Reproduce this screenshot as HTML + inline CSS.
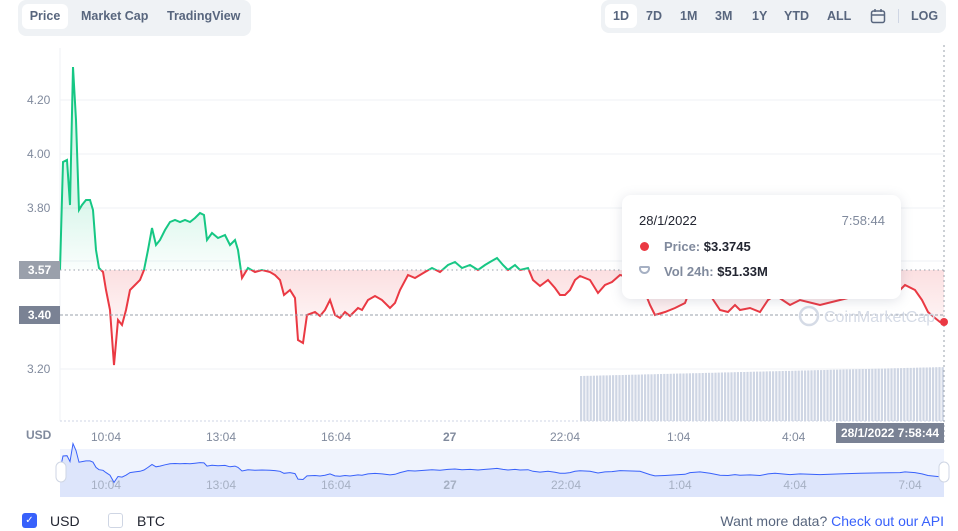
<!DOCTYPE html><html><head><meta charset="utf-8"><style>
body{margin:0;width:958px;height:531px;background:#fff;font-family:"Liberation Sans",sans-serif;overflow:hidden;position:relative}
.tabs{position:absolute;left:18px;top:0;width:233px;height:36px;background:#eff2f5;border-radius:8px}
.tab{position:absolute;top:4px;height:25px;line-height:25px;font-size:12.5px;color:#58667e;font-weight:bold}
.rng{position:absolute;left:601px;top:0;width:345px;height:33px;background:#eff2f5;border-radius:8px}
.r{position:absolute;top:4px;height:24px;line-height:24px;font-size:12.5px;font-weight:bold;color:#58667e}
.ax{position:absolute;font-size:12px;color:#808a9d}
.tt{position:absolute;left:622px;top:195px;width:279px;height:104px;background:#fff;border-radius:9px;box-shadow:0 2px 12px rgba(88,102,126,.18);font-size:13px}
</style></head><body>
<div class="tabs"><div class="tab" style="left:4px;width:46px;background:#fff;border-radius:6px;text-align:center">Price</div><div class="tab" style="left:63px">Market Cap</div><div class="tab" style="left:149px">TradingView</div></div>
<div class="rng"><div class="r" style="left:4px;width:32px;background:#fff;border-radius:6px;text-align:center">1D</div><div class="r" style="left:45px">7D</div><div class="r" style="left:79px">1M</div><div class="r" style="left:114px">3M</div><div class="r" style="left:151px">1Y</div><div class="r" style="left:183px">YTD</div><div class="r" style="left:226px">ALL</div>
<svg style="position:absolute;left:269px;top:8px" width="16" height="16"><rect x="1.5" y="3" width="13" height="11.5" rx="2" fill="none" stroke="#58667e" stroke-width="1.5"/><line x1="1.5" y1="7" x2="14.5" y2="7" stroke="#58667e" stroke-width="1.5"/><line x1="5" y1="1" x2="5" y2="4" stroke="#58667e" stroke-width="1.5"/><line x1="11" y1="1" x2="11" y2="4" stroke="#58667e" stroke-width="1.5"/></svg>
<div style="position:absolute;left:297px;top:9px;width:1px;height:14px;background:#cfd6e4"></div><div class="r" style="left:310px">LOG</div></div>
<svg style="position:absolute;left:0;top:0" width="958" height="531">
<defs>
<linearGradient id="gg" gradientUnits="userSpaceOnUse" x1="0" y1="200" x2="0" y2="270"><stop offset="0" stop-color="#16c784" stop-opacity=".16"/><stop offset="1" stop-color="#16c784" stop-opacity=".02"/></linearGradient>
<linearGradient id="rg" gradientUnits="userSpaceOnUse" x1="0" y1="270" x2="0" y2="340"><stop offset="0" stop-color="#ea3943" stop-opacity=".16"/><stop offset="1" stop-color="#ea3943" stop-opacity=".02"/></linearGradient>
<clipPath id="up"><rect x="0" y="0" width="958" height="270"/></clipPath>
<clipPath id="dn"><rect x="0" y="270" width="958" height="200"/></clipPath>
</defs>
<g stroke="#eff2f5"><line x1="60" y1="100" x2="944" y2="100"/><line x1="60" y1="154" x2="944" y2="154"/><line x1="60" y1="208" x2="944" y2="208"/><line x1="60" y1="261" x2="944" y2="261"/><line x1="60" y1="369" x2="944" y2="369"/><line x1="60" y1="48" x2="60" y2="421"/></g>
<g id="vol" fill="#cfd6e4"></g>
<polygon id="fu" clip-path="url(#up)" fill="url(#gg)"/>
<polygon id="fd" clip-path="url(#dn)" fill="url(#rg)"/>
<polyline id="lu" clip-path="url(#up)" fill="none" stroke="#16c784" stroke-width="2"/>
<polyline id="ld" clip-path="url(#dn)" fill="none" stroke="#ea3943" stroke-width="2"/>
<line x1="60" y1="270" x2="944" y2="270" stroke="#9aa0ab" stroke-dasharray="1.5 3"/>
<line x1="60" y1="315" x2="944" y2="315" stroke="#9aa0ab" stroke-dasharray="3 2"/>
<line x1="944" y1="45" x2="944" y2="445" stroke="#9aa0ab" stroke-dasharray="2 3"/>
<line x1="60" y1="421" x2="944" y2="421" stroke="#cfd6e4" stroke-dasharray="2 2"/>
<circle cx="944" cy="322" r="4" fill="#ea3943"/>
<circle cx="809" cy="316" r="9" fill="none" stroke="#d5dbe6" stroke-width="2.5"/>
<text x="824" y="322" font-size="16" fill="#d5dbe6" font-family="Liberation Sans">CoinMarketCap</text>
<rect x="60" y="449" width="884" height="48" fill="#eff3fd"/>
<polygon id="nf" fill="#dde5fb"/><polyline id="nl" fill="none" stroke="#3861fb" stroke-width="1"/>
<rect x="56" y="462" width="10" height="20" rx="5" fill="#fff" stroke="#cfd6e4"/><rect x="939" y="462" width="10" height="20" rx="5" fill="#fff" stroke="#cfd6e4"/>
<g font-size="12" fill="#a6b0c3" font-family="Liberation Sans" text-anchor="middle"><text x="106" y="489">10:04</text><text x="221" y="489">13:04</text><text x="336" y="489">16:04</text><text x="450" y="489" font-weight="bold">27</text><text x="566" y="489">22:04</text><text x="680" y="489">1:04</text><text x="795" y="489">4:04</text><text x="910" y="489">7:04</text></g>
</svg>
<div class="ax" style="left:27px;top:93px">4.20</div><div class="ax" style="left:27px;top:147px">4.00</div><div class="ax" style="left:27px;top:201px">3.80</div><div class="ax" style="left:27px;top:362px">3.20</div>
<div style="position:absolute;left:19px;top:261px;width:41px;height:18px;background:#9aa0ab;color:#fff;font-size:12px;font-weight:bold;line-height:18px;text-align:center">3.57</div>
<div style="position:absolute;left:19px;top:306px;width:41px;height:18px;background:#7a8294;color:#fff;font-size:12px;font-weight:bold;line-height:18px;text-align:center">3.40</div>
<div class="ax" style="left:26px;top:428px;font-weight:bold">USD</div>
<div class="ax" style="left:91px;top:430px">10:04</div><div class="ax" style="left:206px;top:430px">13:04</div><div class="ax" style="left:321px;top:430px">16:04</div><div class="ax" style="left:443px;top:430px;font-weight:bold">27</div><div class="ax" style="left:550px;top:430px">22:04</div><div class="ax" style="left:667px;top:430px">1:04</div><div class="ax" style="left:782px;top:430px">4:04</div>
<div style="position:absolute;left:836px;top:423px;width:108px;height:20px;background:#7a8294;color:#fff;font-size:12px;font-weight:bold;line-height:20px;text-align:center">28/1/2022 7:58:44</div>
<div class="tt"><div style="position:absolute;left:17px;top:18px;color:#222531">28/1/2022</div><div style="position:absolute;right:16px;top:18px;color:#808a9d">7:58:44</div>
<div style="position:absolute;left:18px;top:47px;width:9px;height:9px;border-radius:50%;background:#ea3943"></div><div style="position:absolute;left:42px;top:44px;color:#808a9d;font-weight:bold">Price: <span style="color:#222531">$3.3745</span></div>
<div style="position:absolute;left:17px;top:71px;width:11px;height:8px;border:2px solid #a6b0c3;border-radius:2px 2px 6px 6px;box-sizing:border-box"></div><div style="position:absolute;left:42px;top:69px;color:#808a9d;font-weight:bold">Vol 24h: <span style="color:#222531">$51.33M</span></div></div>
<div style="position:absolute;left:22px;top:513px;width:15px;height:15px;border-radius:3px;background:#3861fb;color:#fff;font-size:10px;text-align:center;line-height:15px">✓</div><div style="position:absolute;left:50px;top:513px;font-size:14px;color:#222531">USD</div>
<div style="position:absolute;left:108px;top:513px;width:15px;height:15px;border-radius:3px;border:1px solid #cfd6e4;box-sizing:border-box"></div><div style="position:absolute;left:137px;top:513px;font-size:14px;color:#222531">BTC</div>
<div style="position:absolute;right:14px;top:513px;font-size:14px;color:#58667e">Want more data? <span style="color:#3861fb">Check out our API</span></div>
<script>
var p=[[60,270],[63,162],[67,160],[70,205],[73,67],[76,120],[79,210],[82,205],[86,200],[90,200],[93,210],[96,250],[99,268],[103,272],[106,290],[110,310],[114,365],[118,320],[122,325],[126,310],[130,290],[135,285],[140,280],[144,270],[148,250],[152,228],[156,245],[160,240],[165,230],[170,222],[175,220],[180,222],[185,220],[190,222],[195,218],[200,213],[204,215],[207,240],[212,233],[218,238],[225,235],[230,245],[235,240],[238,250],[242,278],[248,268],[255,272],[262,270],[270,272],[275,275],[280,280],[284,295],[290,290],[295,298],[298,340],[303,343],[307,315],[315,312],[320,316],[325,310],[330,300],[335,315],[340,318],[345,312],[350,316],[358,308],[362,310],[368,300],[375,296],[382,300],[390,308],[395,303],[400,290],[408,275],[415,278],[425,272],[432,268],[440,272],[448,265],[455,262],[462,268],[470,265],[478,270],[485,265],[490,262],[497,258],[503,265],[508,270],[515,265],[520,270],[528,268],[533,280],[540,286],[548,280],[555,288],[560,295],[565,295],[570,290],[575,280],[580,276],[590,280],[598,293],[605,285],[612,282],[620,275],[640,280],[650,305],[655,315],[665,312],[675,308],[685,303],[690,290],[700,285],[710,295],[720,310],[728,312],[735,305],[740,310],[750,308],[760,312],[768,300],[775,295],[790,305],[800,300],[820,305],[840,300],[860,295],[880,292],[900,290],[905,285],[915,290],[922,300],[928,312],[935,318],[940,322],[944,322]];
var s=p.map(a=>a.join(',')).join(' ');
['lu','ld'].forEach(i=>document.getElementById(i).setAttribute('points',s));
var f=s+' 944,270 60,270';
['fu','fd'].forEach(i=>document.getElementById(i).setAttribute('points',f));
var v=document.getElementById('vol'),h='';
for(var x=580;x<944;x+=3.2){var t=376-(x-580)/364*9;h+='<rect x="'+x.toFixed(1)+'" y="'+t.toFixed(1)+'" width="2.2" height="'+(421-t).toFixed(1)+'"/>';}
v.innerHTML=h;
var n=p.map(a=>[a[0],(470+(a[1]-270)*0.13).toFixed(1)]);
var ns=n.map(a=>a.join(',')).join(' ');
document.getElementById('nl').setAttribute('points',ns);
document.getElementById('nf').setAttribute('points',ns+' 944,497 60,497');
</script>
</body></html>
